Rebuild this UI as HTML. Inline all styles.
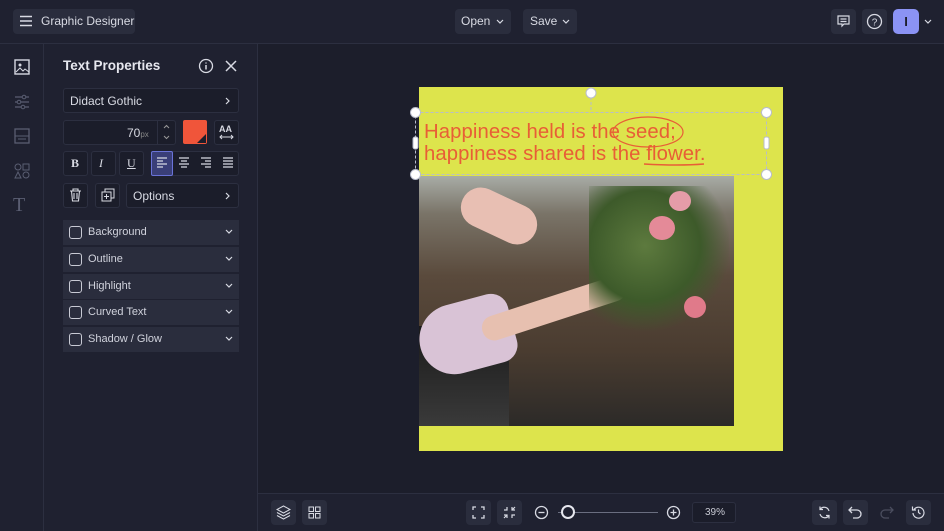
<!DOCTYPE html>
<html><head><meta charset="utf-8"><style>
*{box-sizing:border-box;margin:0;padding:0}
body{width:944px;height:531px;overflow:hidden;background:#1c1e2b;font-family:"Liberation Sans",sans-serif;color:#d8dae3;position:relative}
.abs{position:absolute}
.top{left:0;top:0;width:944px;height:44px;background:#1f2130;border-bottom:1px solid #2c2f40}
.btn{position:absolute;background:#2a2d3d;border-radius:4px}
.side{left:0;top:44px;width:44px;height:487px;background:#1f2130;border-right:1px solid #2c2f40}
.panel{left:44px;top:44px;width:214px;height:487px;background:#1f2130;border-right:1px solid #2c2f40}
.box{position:absolute;background:#1b1d2a;border:1px solid #2c2f40;border-radius:3px}
.row{position:absolute;left:63px;width:176px;height:25px;background:#2a2d3d;font-size:11px;color:#d0d2dc}
.row .cb{position:absolute;left:6px;top:6px;width:13px;height:13px;border:1.5px solid #c8cad4;border-radius:3px}
.row span{position:absolute;left:25px;top:6px}
.row svg{right:6px;top:9px}
svg{position:absolute}
</style></head><body>
<div class="abs top"></div>
<div class="btn" style="left:13px;top:9px;width:122px;height:25px"></div>
<svg style="left:19px;top:15px" width="14" height="12"><path d="M1 1.5h12M1 6h12M1 10.5h12" stroke="#d8dae3" stroke-width="1.5"/></svg>
<div class="abs" style="left:41px;top:14px;font-size:12px">Graphic Designer</div>
<div class="btn" style="left:455px;top:9px;width:56px;height:25px"></div>
<div class="abs" style="left:461px;top:14px;font-size:12px">Open</div>
<svg style="left:496px;top:19px" width="8" height="5"><path d="M1 1l3 3 3-3" stroke="#d8dae3" fill="none" stroke-width="1.2"/></svg>
<div class="btn" style="left:523px;top:9px;width:54px;height:25px"></div>
<div class="abs" style="left:530px;top:14px;font-size:12px">Save</div>
<svg style="left:562px;top:19px" width="8" height="5"><path d="M1 1l3 3 3-3" stroke="#d8dae3" fill="none" stroke-width="1.2"/></svg>
<div class="btn" style="left:831px;top:9px;width:25px;height:25px"></div>
<svg style="left:837px;top:15px" width="13" height="13"><path d="M1 1h11v8H7l-2 2V9H1z M3.5 4h6M3.5 6.5h6" stroke="#d8dae3" fill="none" stroke-width="1.2"/></svg>
<div class="btn" style="left:862px;top:9px;width:25px;height:25px"></div>
<svg style="left:866px;top:13px" width="17" height="17"><circle cx="8.5" cy="8.5" r="7" stroke="#d8dae3" fill="none" stroke-width="1.3"/><text x="8.5" y="12.5" font-size="10" fill="#d8dae3" text-anchor="middle" font-family="Liberation Sans">?</text></svg>
<div class="abs" style="left:893px;top:9px;width:26px;height:25px;background:#8b93f4;border-radius:5px;color:#1c1e2b;font-size:13px;text-align:center;line-height:25px;font-weight:bold">I</div>
<svg style="left:924px;top:19px" width="8" height="5"><path d="M1 1l3 3 3-3" stroke="#d8dae3" fill="none" stroke-width="1.2"/></svg>

<div class="abs side"></div>
<svg style="left:14px;top:59px" width="16" height="16"><rect x="1" y="1" width="14" height="14" stroke="#d8dae3" fill="none" stroke-width="1.4"/><circle cx="6" cy="6" r="1.5" fill="#d8dae3"/><path d="M2 13l4-4 3 3 2-2 4 3" stroke="#d8dae3" fill="none"/></svg>
<svg style="left:14px;top:94px" width="16" height="16"><path d="M1 3h14M1 8h14M1 13h14" stroke="#5a5e72" stroke-width="1.2"/><circle cx="10" cy="3" r="1.8" fill="#1f2130" stroke="#5a5e72"/><circle cx="5" cy="8" r="1.8" fill="#1f2130" stroke="#5a5e72"/><circle cx="9" cy="13" r="1.8" fill="#1f2130" stroke="#5a5e72"/></svg>
<svg style="left:14px;top:128px" width="16" height="16"><rect x="1" y="1" width="14" height="14" stroke="#5a5e72" fill="none" stroke-width="1.3"/><path d="M1 8h14M4 11h8" stroke="#5a5e72"/></svg>
<svg style="left:14px;top:163px" width="16" height="16"><circle cx="4" cy="4" r="3" stroke="#5a5e72" fill="none"/><rect x="9" y="1" width="6" height="6" stroke="#5a5e72" fill="none"/><path d="M4 9l3 6H1z" stroke="#5a5e72" fill="none"/><circle cx="12" cy="12" r="3" stroke="#5a5e72" fill="none"/></svg>
<div class="abs" style="left:13px;top:194px;font-size:20px;color:#5a5e72;font-family:'Liberation Serif',serif">T</div>

<div class="abs panel"></div>
<div class="abs" style="left:63px;top:58px;font-size:13.5px;font-weight:bold;color:#e6e7ee">Text Properties</div>
<svg style="left:198px;top:58px" width="16" height="16"><circle cx="8" cy="8" r="6.5" stroke="#d8dae3" fill="none" stroke-width="1.3"/><path d="M8 7v4.5M8 4.5v1" stroke="#d8dae3" stroke-width="1.5"/></svg>
<svg style="left:225px;top:60px" width="12" height="12"><path d="M1 1l10 10M11 1L1 11" stroke="#d8dae3" stroke-width="1.5"/></svg>
<div class="box" style="left:63px;top:88px;width:176px;height:25px"></div>
<div class="abs" style="left:70px;top:94px;font-size:12px">Didact Gothic</div>
<svg style="left:225px;top:97px" width="5" height="8"><path d="M1 1l3 3-3 3" stroke="#d8dae3" fill="none" stroke-width="1.2"/></svg>
<div class="box" style="left:63px;top:120px;width:113px;height:25px"></div>
<div class="abs" style="left:127px;top:126px;font-size:12px">70<span style="font-size:8px;color:#888">px</span></div>
<div class="abs" style="left:157px;top:121px;width:1px;height:23px;background:#2c2f40"></div>
<svg style="left:163px;top:124px" width="7" height="17"><path d="M1 4l2.5-2.5L6 4M1 12l2.5 2.5L6 12" stroke="#999" fill="none"/></svg>
<div class="abs" style="left:183px;top:120px;width:24px;height:24px;background:#f0553a;border-radius:2px"></div>
<svg style="left:197px;top:134px" width="9" height="9"><path d="M9 0v9H0z" fill="#1c1e2b"/></svg>
<div class="box" style="left:214px;top:120px;width:25px;height:25px"></div>
<div class="abs" style="left:219px;top:124px;font-size:9px;font-weight:bold">AA</div>
<svg style="left:219px;top:134px" width="15" height="6"><path d="M1 3h13M3 1L1 3l2 2M12 1l2 2-2 2" stroke="#d8dae3" fill="none"/></svg>
<div class="box" style="left:63px;top:151px;width:25px;height:25px"></div>
<div class="abs" style="left:71px;top:156px;font-size:12px;font-weight:bold;font-family:'Liberation Serif',serif">B</div>
<div class="box" style="left:91px;top:151px;width:25px;height:25px"></div>
<div class="abs" style="left:99px;top:156px;font-size:12px;font-style:italic;font-family:'Liberation Serif',serif">I</div>
<div class="box" style="left:119px;top:151px;width:25px;height:25px"></div>
<div class="abs" style="left:127px;top:156px;font-size:12px;text-decoration:underline;font-family:'Liberation Serif',serif">U</div>
<div class="box" style="left:151px;top:151px;width:88px;height:25px"></div>
<div class="abs" style="left:151px;top:151px;width:22px;height:25px;background:#3a3f78;border:1px solid #6a73d8;border-radius:2px"></div>
<svg style="left:156px;top:157px" width="80" height="12"><g stroke="#d8dae3" stroke-width="1.2"><path d="M1 1h10M1 4h6M1 7h10M1 10h6"/><path d="M23 1h10M25 4h6M23 7h10M25 10h6"/><path d="M45 1h10M49 4h6M45 7h10M49 10h6"/><path d="M67 1h10M67 4h10M67 7h10M67 10h10"/></g></svg>
<div class="box" style="left:63px;top:183px;width:25px;height:25px"></div>
<svg style="left:69px;top:188px" width="13" height="14"><path d="M1 3h11M4 3V1h5v2M2.5 3l1 10h6l1-10M5 5v6M8 5v6" stroke="#d8dae3" fill="none" stroke-width="1.1"/></svg>
<div class="box" style="left:95px;top:183px;width:25px;height:25px"></div>
<svg style="left:101px;top:188px" width="14" height="14"><rect x="4" y="1" width="9" height="9" stroke="#d8dae3" fill="none"/><rect x="1" y="4" width="9" height="9" stroke="#d8dae3" fill="#1b1d2a"/><path d="M5.5 6v5M3 8.5h5" stroke="#d8dae3"/></svg>
<div class="box" style="left:126px;top:183px;width:113px;height:25px"></div>
<div class="abs" style="left:133px;top:189px;font-size:12px">Options</div>
<svg style="left:225px;top:192px" width="5" height="8"><path d="M1 1l3 3-3 3" stroke="#d8dae3" fill="none" stroke-width="1.2"/></svg>
<div class="row" style="top:220px"><div class="cb"></div><span>Background</span><svg width="8" height="5"><path d="M1 1l3 3 3-3" stroke="#d8dae3" fill="none" stroke-width="1.2"/></svg></div>
<div class="row" style="top:247px"><div class="cb"></div><span>Outline</span><svg width="8" height="5"><path d="M1 1l3 3 3-3" stroke="#d8dae3" fill="none" stroke-width="1.2"/></svg></div>
<div class="row" style="top:274px"><div class="cb"></div><span>Highlight</span><svg width="8" height="5"><path d="M1 1l3 3 3-3" stroke="#d8dae3" fill="none" stroke-width="1.2"/></svg></div>
<div class="row" style="top:300px"><div class="cb"></div><span>Curved Text</span><svg width="8" height="5"><path d="M1 1l3 3 3-3" stroke="#d8dae3" fill="none" stroke-width="1.2"/></svg></div>
<div class="row" style="top:327px"><div class="cb"></div><span>Shadow / Glow</span><svg width="8" height="5"><path d="M1 1l3 3 3-3" stroke="#d8dae3" fill="none" stroke-width="1.2"/></svg></div>

<!-- canvas -->
<div class="abs" style="left:419px;top:87px;width:364px;height:364px;background:#dde44c"></div>
<div class="abs" style="left:419px;top:176px;width:315px;height:250px;overflow:hidden;background:linear-gradient(180deg,#a8aca6 0%,#7a7468 15%,#5a4a3c 40%,#4a3c30 70%,#2c2a28 100%)">
 <div class="abs" style="left:0;top:150px;width:90px;height:100px;background:linear-gradient(180deg,#1a1a1a,#3a3a3a)"></div>
 <div class="abs" style="left:0;top:125px;width:95px;height:70px;background:#d9c3d6;border-radius:40px 20px 20px 40px;transform:rotate(-15deg)"></div>
 <div class="abs" style="left:60px;top:120px;width:150px;height:25px;background:#e7c0b0;border-radius:12px;transform:rotate(-18deg)"></div>
 <div class="abs" style="left:170px;top:10px;width:140px;height:150px;background:radial-gradient(circle at 40% 40%,#5d7a3e 0%,#3d5a2a 45%,transparent 70%)"></div>
 <div class="abs" style="left:230px;top:40px;width:26px;height:24px;background:#e48a98;border-radius:50%"></div>
 <div class="abs" style="left:265px;top:120px;width:22px;height:22px;background:#e07a8a;border-radius:50%"></div>
 <div class="abs" style="left:250px;top:15px;width:22px;height:20px;background:#e59ca8;border-radius:50%"></div>
 <div class="abs" style="left:40px;top:20px;width:80px;height:40px;background:#e8bfb3;border-radius:20px;transform:rotate(25deg)"></div>
</div>
<div class="abs" style="left:424px;top:121px;font-size:20.3px;line-height:22px;color:#e85e36;font-family:'Liberation Sans',sans-serif;letter-spacing:0.1px;white-space:nowrap">Happiness held is the seed;<br>happiness shared is the flower.</div>
<svg style="left:410px;top:86px" width="370" height="96"><rect x="5.5" y="26.5" width="351" height="62" stroke="#b8bccc" fill="none" stroke-dasharray="3,2"/><path d="M181 11v15" stroke="#b8bccc" stroke-dasharray="3,2"/><ellipse cx="238" cy="46" rx="35" ry="15" stroke="#e85e36" fill="none" stroke-width="1.2"/><path d="M234 78q35 2 60 0" stroke="#e85e36" stroke-width="1.5" fill="none"/><g fill="#fff" stroke="#b8bccc"><circle cx="181" cy="7" r="5"/><circle cx="5.5" cy="26.5" r="5"/><circle cx="356.5" cy="26.5" r="5"/><circle cx="5.5" cy="88.5" r="5"/><circle cx="356.5" cy="88.5" r="5"/><rect x="3" y="51" width="5" height="12" rx="2"/><rect x="354" y="51" width="5" height="12" rx="2"/></g></svg>

<div class="abs" style="left:258px;top:493px;width:686px;height:38px;background:#1f2130;border-top:1px solid #2c2f40"></div>
<div class="btn" style="left:271px;top:500px;width:25px;height:25px"></div>
<svg style="left:276px;top:505px" width="15" height="15"><path d="M7.5 1L14 4.5 7.5 8 1 4.5z M1 7.5l6.5 3.5 6.5-3.5M1 10.5l6.5 3.5 6.5-3.5" stroke="#d8dae3" fill="none"/></svg>
<div class="btn" style="left:302px;top:500px;width:25px;height:25px"></div>
<svg style="left:308px;top:506px" width="13" height="13"><g stroke="#d8dae3" fill="none"><rect x="1" y="1" width="4.5" height="4.5"/><rect x="7.5" y="1" width="4.5" height="4.5"/><rect x="1" y="7.5" width="4.5" height="4.5"/><rect x="7.5" y="7.5" width="4.5" height="4.5"/></g></svg>
<div class="btn" style="left:466px;top:500px;width:25px;height:25px"></div>
<svg style="left:472px;top:506px" width="13" height="13"><path d="M1 4V1h3M9 1h3v3M12 9v3H9M4 12H1V9" stroke="#d8dae3" fill="none" stroke-width="1.3"/></svg>
<div class="btn" style="left:497px;top:500px;width:25px;height:25px"></div>
<svg style="left:503px;top:506px" width="13" height="13"><path d="M1 4h3V1M9 1v3h3M12 9H9v3M4 12V9H1M9 4l3-3M4 9l-3 3" stroke="#d8dae3" fill="none" stroke-width="1.2"/></svg>
<svg style="left:534px;top:505px" width="15" height="15"><circle cx="7.5" cy="7.5" r="6" stroke="#d8dae3" fill="none" stroke-width="1.3"/><path d="M4.5 7.5h6" stroke="#d8dae3" stroke-width="1.3"/></svg>
<div class="abs" style="left:558px;top:512px;width:100px;height:1px;background:#6a6e80"></div>
<div class="abs" style="left:561px;top:505px;width:14px;height:14px;border-radius:50%;border:2px solid #e6e7ee;background:#1f2130"></div>
<svg style="left:666px;top:505px" width="15" height="15"><circle cx="7.5" cy="7.5" r="6" stroke="#d8dae3" fill="none" stroke-width="1.3"/><path d="M4.5 7.5h6M7.5 4.5v6" stroke="#d8dae3" stroke-width="1.3"/></svg>
<div class="box" style="left:692px;top:502px;width:44px;height:21px"></div>
<div class="abs" style="left:705px;top:507px;font-size:10px;color:#c8cad4">39%</div>
<div class="btn" style="left:812px;top:500px;width:25px;height:25px"></div>
<svg style="left:817px;top:505px" width="15" height="15"><path d="M12 6A5 5 0 0 0 3 4.5M3 9a5 5 0 0 0 9 1.5M3 1.5v3h3M12 13.5v-3H9" stroke="#d8dae3" fill="none" stroke-width="1.2"/></svg>
<div class="btn" style="left:843px;top:500px;width:25px;height:25px"></div>
<svg style="left:848px;top:506px" width="15" height="13"><path d="M4 1L1 4l3 3M1 4h8a4 4 0 0 1 0 8H5" stroke="#d8dae3" fill="none" stroke-width="1.3"/></svg>
<svg style="left:879px;top:506px" width="15" height="13"><path d="M11 1l3 3-3 3M14 4H6a4 4 0 0 0 0 8h4" stroke="#4a4d5e" fill="none" stroke-width="1.3"/></svg>
<div class="btn" style="left:906px;top:500px;width:25px;height:25px"></div>
<svg style="left:911px;top:505px" width="15" height="15"><path d="M3 4.5A5.5 5.5 0 1 1 2 8M1.5 1.5v3.5H5M7.5 4.5v3l2 1.5" stroke="#d8dae3" fill="none" stroke-width="1.2"/></svg>
</body></html>
